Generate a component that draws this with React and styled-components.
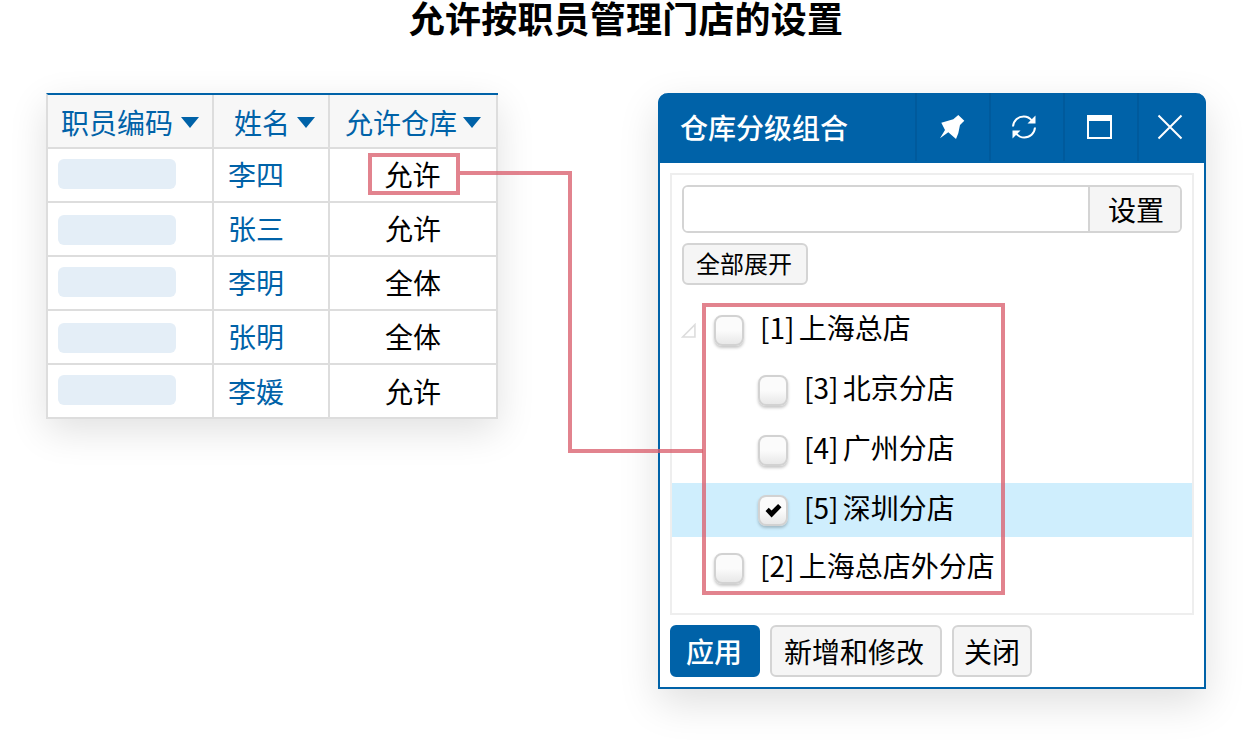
import React from "react";
import styled, { createGlobalStyle } from "styled-components";

const blue = "#0062a8";
const mark = "rgba(218, 96, 110, 0.78)";

const Global = createGlobalStyle`
  html, body { margin: 0; padding: 0; background: #fff; }
  body { font-family: "Noto Sans CJK SC", "Noto Sans", sans-serif; color: #000; }
  * { box-sizing: border-box; }
`;

const Page = styled.div`
  position: relative;
  width: 1252px;
  height: 755px;
  overflow: hidden;
`;
const Title = styled.h1`
  margin: 0;
  height: 93px;
  text-align: center;
  font-size: 36px;
  line-height: 34px;
  letter-spacing: 0.2px;
  font-weight: 700;
`;
const Content = styled.div`
  display: flex;
  align-items: flex-start;
  gap: 160px;
  padding-left: 46px;
`;

/* table */
const Table = styled.div`
  width: 452px;
  display: grid;
  grid-template-columns: 166px 116px 168px;
  grid-auto-rows: 54px;
  border-top: 2px solid ${blue};
  border-left: 2px solid #ddd;
  background: #fff;
  box-shadow: 0 12px 36px rgba(0, 0, 0, 0.12);
`;
const Cell = styled.div`
  display: flex;
  align-items: center;
  justify-content: center;
  border-right: 2px solid #ddd;
  border-bottom: 2px solid #ddd;
  font-size: 28px;
  line-height: 40px;
  color: #000;
  padding-bottom: ${(p) => p.$pb ?? 3}px;
`;
const NameCell = styled(Cell)`
  justify-content: flex-start;
  padding-left: 14px;
  color: ${blue};
`;
const BlurCell = styled(Cell)`
  align-items: flex-start;
  justify-content: flex-start;
  padding: ${(p) => p.$top}px 0 0 10px;
`;
const HeadCell = styled(Cell)`
  background: #f7f7f7;
  color: ${blue};
  gap: ${(p) => p.$gap}px;
  padding: 1px 0 0 ${(p) => p.$pad || 0}px;
`;
const Caret = styled.span`
  width: 0;
  height: 0;
  margin-top: 2px;
  border-left: 9px solid transparent;
  border-right: 9px solid transparent;
  border-top: 11px solid ${blue};
`;
const Blur = styled.span`
  width: 118px;
  height: 30px;
  border-radius: 6px;
  background: #e4eef7;
`;
const CellMark = styled.span`
  display: flex;
  align-items: center;
  justify-content: center;
  width: 92px;
  height: 42px;
  margin-left: 1px;
  padding: 0 2px 0 0;
  border: 4px solid ${mark};
`;

/* dialog */
const Dialog = styled.section`
  width: 548px;
  height: 596px;
  display: flex;
  flex-direction: column;
  border-radius: 10px 10px 0 0;
  background: #fff;
  border: 2px solid ${blue};
  border-top: 0;
  box-shadow: 0 14px 40px rgba(0, 0, 0, 0.13);
`;
const Header = styled.header`
  display: flex;
  height: 70px;
  margin: 0 -2px;
  background: ${blue};
  border-radius: 10px 10px 0 0;
  color: #fff;
`;
const DialogTitle = styled.div`
  flex: 1;
  padding: 14px 0 0 22px;
  font-size: 28px;
  line-height: 40px;
  font-weight: 500;
`;
const HeaderButton = styled.div`
  width: ${(p) => p.$w || 74}px;
  height: 68px;
  display: flex;
  align-items: center;
  justify-content: center;
  border-left: 2px solid #005a9c;
  padding-right: ${(p) => p.$pr}px;
`;
const Panel = styled.div`
  position: relative;
  height: 442px;
  margin: 10px 10px 0;
  padding: 10px;
  border: 2px solid #eee;
`;
const SearchRow = styled.div`
  display: flex;
  height: 48px;
  border: 2px solid #d4d4d4;
  border-radius: 6px;
  overflow: hidden;
`;
const SearchInput = styled.div`
  flex: 1;
  background: #fff;
`;
const SearchButton = styled.div`
  width: 92px;
  display: flex;
  align-items: center;
  justify-content: center;
  padding-left: 2px;
  border-left: 2px solid #d4d4d4;
  background: #f5f5f5;
  font-size: 28px;
  line-height: 40px;
`;
const Button = styled.div`
  display: inline-flex;
  align-items: center;
  justify-content: center;
  padding-right: ${(p) => p.$pr || 0}px;
  border: 2px solid ${(p) => (p.$primary ? blue : "#d4d4d4")};
  border-radius: 6px;
  background: ${(p) => (p.$primary ? blue : "#f5f5f5")};
  color: ${(p) => (p.$primary ? "#fff" : "#000")};
  font-weight: ${(p) => (p.$primary ? 500 : 400)};
  font-size: 28px;
  line-height: 40px;
  height: 52px;
  width: ${(p) => p.$w}px;
`;
const SmallButton = styled(Button)`
  margin-top: 10px;
  height: 42px;
  font-size: 24px;
  line-height: 34px;
  padding: 0 2px 2px 0;
`;
const Tree = styled.div`
  display: flex;
  flex-direction: column;
  gap: 6px;
  margin: 18px -10px 0;
`;
const TreeRow = styled.div`
  position: relative;
  display: flex;
  align-items: center;
  height: 54px;
  margin-top: ${(p) => (p.$tight ? "-2px" : "0")};
  padding: 0 0 6px ${(p) => (p.$child ? 86 : 42)}px;
  background: ${(p) => (p.$selected ? "#cfeefd" : "transparent")};
  font-size: 28px;
  line-height: 40px;
  word-spacing: -2px;
`;
const Expander = styled.svg`
  position: absolute;
  left: 9px;
  top: 20px;
`;
const Box = styled.span`
  flex: none;
  width: 30px;
  height: 31px;
  margin: 6px 16px 0 0;
  display: flex;
  align-items: center;
  justify-content: center;
  border: 2px solid #d2d2d2;
  border-radius: 8px;
  background: linear-gradient(#fbfbfb 50%, #e8e8e8);
  box-shadow: 0 2px 3px rgba(0, 0, 0, 0.22);
`;
const Footer = styled.footer`
  display: flex;
  gap: 10px;
  margin: 10px 10px 0;
`;

/* overlays */
const TreeMark = styled.div`
  position: absolute;
  left: 30px;
  top: 128px;
  width: 303px;
  height: 292px;
  border: 4px solid ${mark};
  pointer-events: none;
`;
const Connector = styled.svg`
  position: absolute;
  left: 0;
  top: 0;
  pointer-events: none;
`;

const Pin = () => (
  <svg width="26" height="26" viewBox="9 14 26 26" fill="#fff">
    <path d="M11.300 22.700L23.300 19.300 28.300 15 34.300 20.700 30 25 28.300 33.300 26 39 18.300 32.300 10 38.300 15 30z" strokeLinejoin="round" />
  </svg>
);
const Sync = () => (
  <svg width="28" height="28" viewBox="0 0 28 28" fill="none" stroke="#fff" strokeWidth="2">
    <path d="M3 13.500C3.500 7.500 8 3.500 13.800 3.500c3.500 0 6 1.400 8 4" />
    <path d="M25 14.500c-.5 6-5 10-10.800 10-3.500 0-6-1.400-8-4" />
    <path d="M25.500 2.500v8h-8z" fill="#fff" stroke="none" />
    <path d="M2.500 25.500v-8h8z" fill="#fff" stroke="none" />
  </svg>
);
const Maximize = () => (
  <svg width="26" height="24" viewBox="0 0 26 24" fill="none" stroke="#fff">
    <rect x="1" y="1" width="23" height="22" strokeWidth="2" />
    <path d="M0 3.500h25" strokeWidth="5" />
  </svg>
);
const Close = () => (
  <svg width="26" height="26" viewBox="0 0 26 26" fill="none" stroke="#fff" strokeWidth="2">
    <path d="M1.500 1.500l23 23M24.500 1.500l-23 23" />
  </svg>
);
const Check = () => (
  <svg width="17" height="15" viewBox="0 0 16 14">
    <path d="M.5 7.500l3-3 2.700 2.500L12.300.8 15.500 4 6.200 13.500z" fill="#000" />
  </svg>
);

const rows = [
  { name: "李四", scope: "允许", marked: true, pb: 3, top: 10 },
  { name: "张三", scope: "允许", pb: 3, top: 12 },
  { name: "李明", scope: "全体", pb: 3, top: 10 },
  { name: "张明", scope: "全体", pb: 3, top: 12 },
  { name: "李媛", scope: "允许", pb: 0, top: 10 },
];
const tree = [
  { t: "[1] 上海总店", expander: true },
  { t: "[3] 北京分店", child: true },
  { t: "[4] 广州分店", child: true },
  { t: "[5] 深圳分店", child: true, selected: true, checked: true },
  { t: "[2] 上海总店外分店", tight: true },
];

export default function App() {
  return (
    <Page>
      <Global />
      <Title>允许按职员管理门店的设置</Title>
      <Content>
        <Table>
          <HeadCell $gap={8}>职员编码<Caret /></HeadCell>
          <HeadCell $gap={7} $pad={7}>姓名<Caret /></HeadCell>
          <HeadCell $gap={6}>允许仓库<Caret /></HeadCell>
          {rows.map((r) => (
            <React.Fragment key={r.name}>
              <BlurCell $top={r.top}><Blur /></BlurCell>
              <NameCell $pb={r.pb}>{r.name}</NameCell>
              <Cell $pb={r.marked ? 2 : r.pb}>{r.marked ? <CellMark>{r.scope}</CellMark> : r.scope}</Cell>
            </React.Fragment>
          ))}
        </Table>
        <Dialog>
          <Header>
            <DialogTitle>仓库分级组合</DialogTitle>
            <HeaderButton $pr={2}><Pin /></HeaderButton>
            <HeaderButton $pr={6}><Sync /></HeaderButton>
            <HeaderButton $pr={2}><Maximize /></HeaderButton>
            <HeaderButton $pr={5} $w={69}><Close /></HeaderButton>
          </Header>
          <Panel>
            <SearchRow>
              <SearchInput />
              <SearchButton>设置</SearchButton>
            </SearchRow>
            <SmallButton $w={126}>全部展开</SmallButton>
            <Tree>
              {tree.map((n) => (
                <TreeRow key={n.t} $child={n.child} $selected={n.selected} $tight={n.tight}>
                  {n.expander && (
                    <Expander width="15" height="15" viewBox="0 0 14 14">
                      <path d="M13 1.500V13H1.500z" fill="#fff" stroke="#ddd" strokeWidth="1.500" />
                    </Expander>
                  )}
                  <Box>{n.checked && <Check />}</Box>
                  {n.t}
                </TreeRow>
              ))}
            </Tree>
            <TreeMark />
          </Panel>
          <Footer>
            <Button $primary $w={90} $pr={2}>应用</Button>
            <Button $w={172} $pr={4}>新增和修改</Button>
            <Button $w={80}>关闭</Button>
          </Footer>
        </Dialog>
      </Content>
      <Connector width="1252" height="755" fill="none" stroke={mark} strokeWidth="4">
        <path d="M460 173H570V451H703" />
      </Connector>
    </Page>
  );
}
